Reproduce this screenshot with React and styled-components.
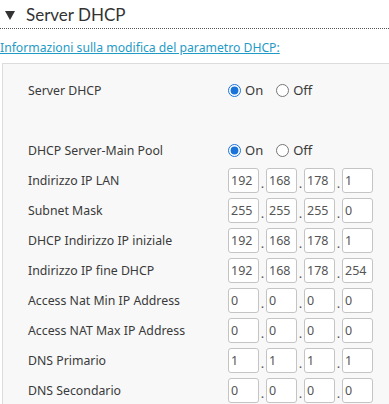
import React from 'react'
import styled, { createGlobalStyle } from 'styled-components'

const GlobalStyle = createGlobalStyle`
    html, body {
        margin: 0;
        padding: 0;
        background: #ffffff;
        overflow: hidden;
    }
    body {
        font-family: "Noto Sans", "Liberation Sans", sans-serif;
        color: #3a3a3a;
    }
`

const Page = styled.div`
    width: 389px;
    height: 404px;
    overflow: hidden;
`

const SectionHeader = styled.div`
    display: flex;
    align-items: center;
    height: 28px;
    border-bottom: 1px dotted #555555;
    font-family: Lato, "Noto Sans", sans-serif;
    font-size: 17px;
    color: #333333;
`

const Arrow = styled.span`
    width: 0;
    height: 0;
    margin: 2px 11px 0 5px;
    border-left: 5px solid transparent;
    border-right: 5px solid transparent;
    border-top: 9px solid #333333;
`

const InfoLink = styled.a`
    display: block;
    margin-top: 10px;
    font-size: 12.2px;
    line-height: 17px;
    color: #1f9bc6;
    text-decoration: underline;
    cursor: pointer;
`

const Panel = styled.div`
    margin: 7px 0 0 2px;
    width: 420px;
    padding: 11px 0 0 25px;
    background: #f8f8f8;
    border: 1px solid #dcdcdc;
`

const Row = styled.div`
    display: flex;
    align-items: center;
    height: 30px;
    font-size: 12.3px;
`

const Label = styled.div`
    width: 200px;
    flex: none;
`

const RadioGroup = styled.div`
    display: flex;
    align-items: center;
`

const RadioOption = styled.label`
    display: flex;
    align-items: center;
    margin-right: 13px;
    font-size: 13px;
    input {
        margin: 0 4px 0 0;
        width: 13px;
        height: 13px;
        accent-color: #1a73d9;
    }
`

const IpGroup = styled.div`
    display: flex;
    align-items: center;
`

const Octet = styled.input`
    box-sizing: border-box;
    width: 31px;
    height: 25px;
    padding: 0 0 0 2px;
    border: 1px solid #c4c4c4;
    border-radius: 3px;
    background: #ffffff;
    font-family: "Noto Sans", "Liberation Sans", sans-serif;
    font-size: 12.5px;
    color: #555555;
    outline: none;
`

const Dot = styled.span`
    width: 7px;
    text-align: center;
    font-size: 13px;
    color: #555555;
    padding-top: 6px;
`

const ipRows = [
    ['Indirizzo IP LAN', ['192', '168', '178', '1']],
    ['Subnet Mask', ['255', '255', '255', '0']],
    ['DHCP Indirizzo IP iniziale', ['192', '168', '178', '1']],
    ['Indirizzo IP fine DHCP', ['192', '168', '178', '254']],
    ['Access Nat Min IP Address', ['0', '0', '0', '0']],
    ['Access NAT Max IP Address', ['0', '0', '0', '0']],
    ['DNS Primario', ['1', '1', '1', '1']],
    ['DNS Secondario', ['0', '0', '0', '0']],
]

const OnOff = ({ name }) => (
    <RadioGroup>
        <RadioOption>
            <input type="radio" name={name} defaultChecked />
            On
        </RadioOption>
        <RadioOption>
            <input type="radio" name={name} />
            Off
        </RadioOption>
    </RadioGroup>
)

const IpField = ({ values }) => (
    <IpGroup>
        {values.map((v, i) => (
            <React.Fragment key={i}>
                {i > 0 && <Dot>.</Dot>}
                <Octet defaultValue={v} maxLength={3} />
            </React.Fragment>
        ))}
    </IpGroup>
)

const App = () => {
    return (
        <Page>
            <GlobalStyle />
            <SectionHeader>
                <Arrow />
                Server DHCP
            </SectionHeader>
            <InfoLink>Informazioni sulla modifica del parametro DHCP:</InfoLink>
            <Panel>
                <Row>
                    <Label>Server DHCP</Label>
                    <OnOff name="dhcp" />
                </Row>
                <Row />
                <Row>
                    <Label>DHCP Server-Main Pool</Label>
                    <OnOff name="pool" />
                </Row>
                {ipRows.map(([label, values]) => (
                    <Row key={label}>
                        <Label>{label}</Label>
                        <IpField values={values} />
                    </Row>
                ))}
            </Panel>
        </Page>
    )
}

export default App
